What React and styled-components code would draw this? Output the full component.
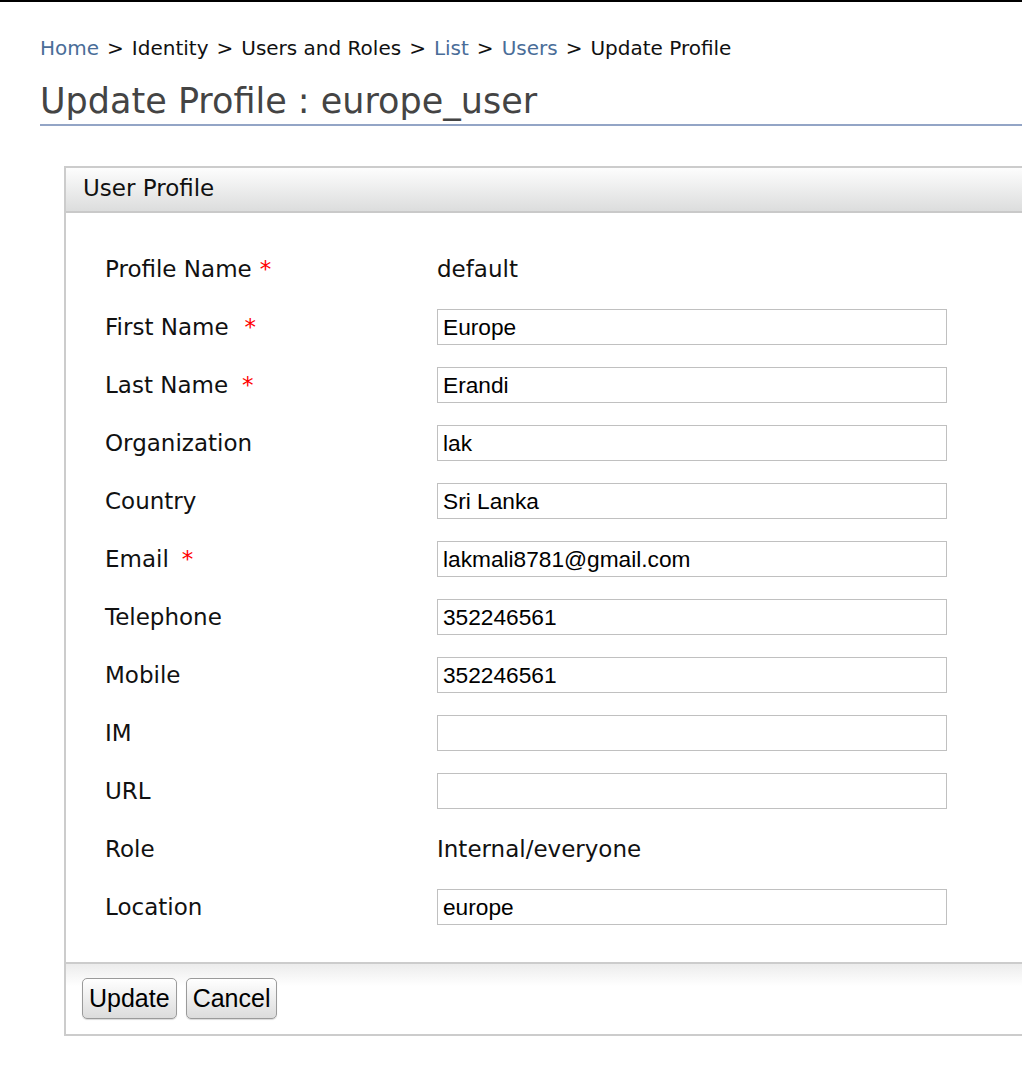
import React from "react";
import styled, { createGlobalStyle } from "styled-components";

const GlobalStyle = createGlobalStyle`
  html, body {
    margin: 0;
    padding: 0;
    background: #fff;
    overflow-x: hidden;
  }
  body {
    font-family: "DejaVu Sans", "Lucida Grande", Verdana, sans-serif;
    color: #111;
  }
`;

const fields = [
  { label: "Profile Name", required: true, gap: 8, value: "default", text: true },
  { label: "First Name", required: true, gap: 16, value: "Europe" },
  { label: "Last Name", required: true, gap: 14, value: "Erandi" },
  { label: "Organization", value: "lak" },
  { label: "Country", value: "Sri Lanka" },
  { label: "Email", required: true, gap: 13, value: "lakmali8781@gmail.com" },
  { label: "Telephone", value: "352246561" },
  { label: "Mobile", value: "352246561" },
  { label: "IM", value: "" },
  { label: "URL", value: "" },
  { label: "Role", value: "Internal/everyone", text: true },
  { label: "Location", value: "europe" },
];

const App = () => {
  return (
    <Page>
      <GlobalStyle />
      <Breadcrumb>
        <Crumb href="#">Home</Crumb>
        <Sep>&gt;</Sep>
        <span>Identity</span>
        <Sep>&gt;</Sep>
        <span>Users and Roles</span>
        <Sep>&gt;</Sep>
        <Crumb href="#">List</Crumb>
        <Sep>&gt;</Sep>
        <Crumb href="#">Users</Crumb>
        <Sep>&gt;</Sep>
        <span>Update Profile</span>
      </Breadcrumb>
      <Title>Update Profile : europe_user</Title>

      <Panel>
        <PanelHeader>User Profile</PanelHeader>
        <FormGrid>
          {fields.map((f) => (
            <React.Fragment key={f.label}>
              <Label>
                {f.label}
                {f.required && <Required $gap={f.gap}>*</Required>}
              </Label>
              {f.text ? (
                <Value>{f.value}</Value>
              ) : (
                <Input type="text" defaultValue={f.value} />
              )}
            </React.Fragment>
          ))}
        </FormGrid>
        <Footer>
          <Button type="button">Update</Button>
          <Button type="button">Cancel</Button>
        </Footer>
      </Panel>
    </Page>
  );
};

/**
 *  STYLES
 */
const Page = styled.div`
  border-top: 2px solid #000;
  padding: 34px 0 40px 40px;
`;

const Breadcrumb = styled.div`
  font-size: 20px;
  line-height: 24px;
  color: #111;
  white-space: nowrap;
`;

const Crumb = styled.a`
  color: #4a6d98;
  text-decoration: none;
`;

const Sep = styled.span`
  margin: 0 8px;
  color: #111;
`;

const Title = styled.h1`
  margin: 21px 0 0;
  font-size: 35px;
  font-weight: normal;
  line-height: 40px;
  color: #444;
  padding-bottom: 3px;
  border-bottom: 2px solid #93a5c6;
`;

const Panel = styled.div`
  margin: 40px 0 0 24px;
  width: 1000px;
  border: 2px solid #cccccc;
  background: #fff;
`;

const PanelHeader = styled.div`
  height: 43px;
  line-height: 41px;
  padding-left: 17px;
  font-size: 23px;
  color: #111;
  background: linear-gradient(#fdfdfd, #dcdddd);
  border-bottom: 2px solid #c9c9c9;
`;

const FormGrid = styled.div`
  display: grid;
  grid-template-columns: 332px 510px;
  grid-auto-rows: 36px;
  row-gap: 22px;
  padding: 38px 0 37px 39px;
  align-items: center;
`;

const Label = styled.div`
  font-size: 23px;
  color: #111;
  white-space: nowrap;
`;

const Required = styled.span`
  color: #ff0000;
  margin-left: ${(p) => p.$gap}px;
`;

const Value = styled.div`
  font-size: 23px;
  color: #111;
`;

const Input = styled.input`
  box-sizing: border-box;
  width: 510px;
  height: 36px;
  margin: 0;
  padding: 0 5px;
  border: 1px solid #c0c0c0;
  border-radius: 0;
  font-family: "Liberation Sans", Arial, sans-serif;
  font-size: 22.7px;
  color: #000;
  outline: none;
`;

const Footer = styled.div`
  display: flex;
  gap: 9px;
  padding: 14px 16px 15px;
  border-top: 2px solid #cccccc;
  background: linear-gradient(#ececec, #ffffff 22px);
`;

const Button = styled.button`
  height: 41px;
  padding: 0 6px;
  border: 1px solid #9a9a9a;
  border-radius: 5px;
  background: linear-gradient(#ffffff, #dcdcdc);
  font-family: "Liberation Sans", Arial, sans-serif;
  font-size: 25px;
  color: #000;
  box-shadow: 0 1px 1px rgba(0, 0, 0, 0.15);
  cursor: pointer;
`;

export default App;
